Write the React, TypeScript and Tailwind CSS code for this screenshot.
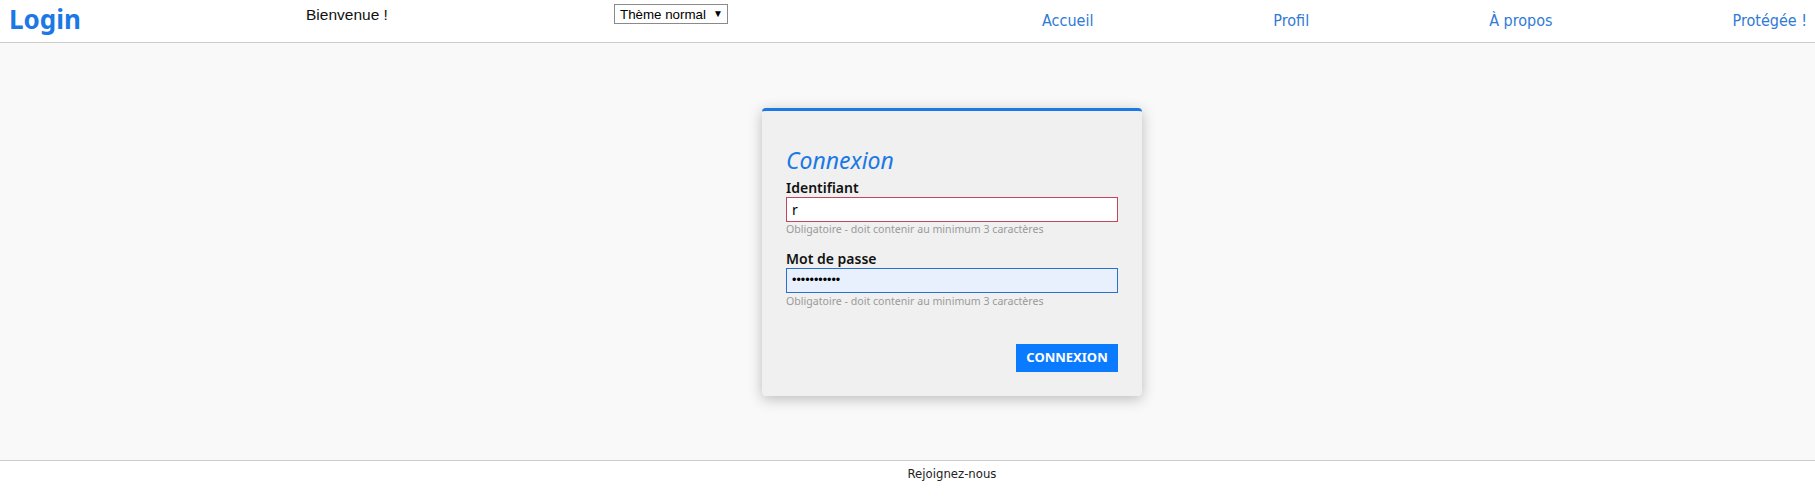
import React from "react";

const plex = { fontFamily: '"Noto Sans", "Open Sans", sans-serif' };
const arial = { fontFamily: '"Liberation Sans", Arial, sans-serif' };
const cond = { fontFamily: '"DejaVu Sans Condensed", "Liberation Sans Narrow", sans-serif' };

export default function App() {
  return (
    <div className="w-[1815px] h-[497px] flex flex-col bg-white overflow-hidden">
      <header className="h-[43px] shrink-0 border-b border-[#cccccc] bg-white flex items-start">
        <div className="w-[306px] pl-[9px] pt-[6px]">
          <span className="text-[26px] leading-[26px] font-bold text-[#1b78e5]" style={plex}>
            Login
          </span>
        </div>
        <div className="w-[308px] pt-[7px] text-[15.5px] leading-[16px] text-[#111]" style={arial}>
          Bienvenue !
        </div>
        <div className="w-[428px] pt-[4px]">
          <div
            className="w-[114px] h-[20px] border border-[#8a8a8a] bg-white flex items-center pl-[5px] gap-[7px] text-[13.33px] leading-[15px] text-black whitespace-nowrap"
            style={arial}
          >
            <span>Thème normal</span>
            <span className="text-[10px] leading-[10px]">▼</span>
          </div>
        </div>
        <nav className="flex-1 flex justify-between pr-[8px] pt-[12px] text-[16px] leading-[18px] text-[#2f7ad6]" style={cond}>
          <a>Accueil</a>
          <a>Profil</a>
          <a>À propos</a>
          <a>Protégée !</a>
        </nav>
      </header>

      <main className="h-[417px] shrink-0 bg-[#f9f9f9] flex items-center justify-center pl-[89px]">
        <div
          className="w-[380px] h-[288px] bg-[#f0f0f0] rounded-[4px] border-t-[3px] border-[#1b78e5] shadow-[0_3px_14px_rgba(0,0,0,0.25)] px-[24px] flex flex-col"
          style={plex}
        >
          <h1 className="mt-[35px] text-[23px] leading-[28px] italic text-[#1b78e5]">Connexion</h1>
          <label className="mt-[5px] text-[14px] leading-[17px] font-semibold text-[#111]">Identifiant</label>
          <input
            readOnly
            value="r"
            className="mt-[1px] h-[25px] w-full border border-[#c4455e] bg-white px-[5px] text-[14px] text-black outline-none"
            style={plex}
          />
          <p className="h-[14px] text-[10.6px] leading-[14px] text-[#9a9a9a] whitespace-nowrap">
            Obligatoire - doit contenir au minimum 3 caractères
          </p>
          <label className="mt-[14px] text-[14px] leading-[17px] font-semibold text-[#111]">Mot de passe</label>
          <input
            readOnly
            type="password"
            value="abcdefghijk"
            className="mt-[1px] h-[25px] w-full border border-[#2b6fce] bg-[#e8f0fe] px-[5px] text-[12.5px] text-black outline-none"
            style={arial}
          />
          <p className="h-[14px] mt-[1px] text-[10.6px] leading-[14px] text-[#9a9a9a] whitespace-nowrap">
            Obligatoire - doit contenir au minimum 3 caractères
          </p>
          <div className="mt-[36px] flex justify-end">
            <button className="w-[102px] h-[28px] bg-[#0a7bff] text-white text-[13px] font-bold" style={plex}>
              CONNEXION
            </button>
          </div>
        </div>
      </main>

      <footer className="flex-1 border-t border-[#cccccc] bg-white flex justify-center pl-[89px] pt-[5px]">
        <span className="text-[13px] leading-[16px] text-[#222]" style={cond}>
          Rejoignez-nous
        </span>
      </footer>
    </div>
  );
}
